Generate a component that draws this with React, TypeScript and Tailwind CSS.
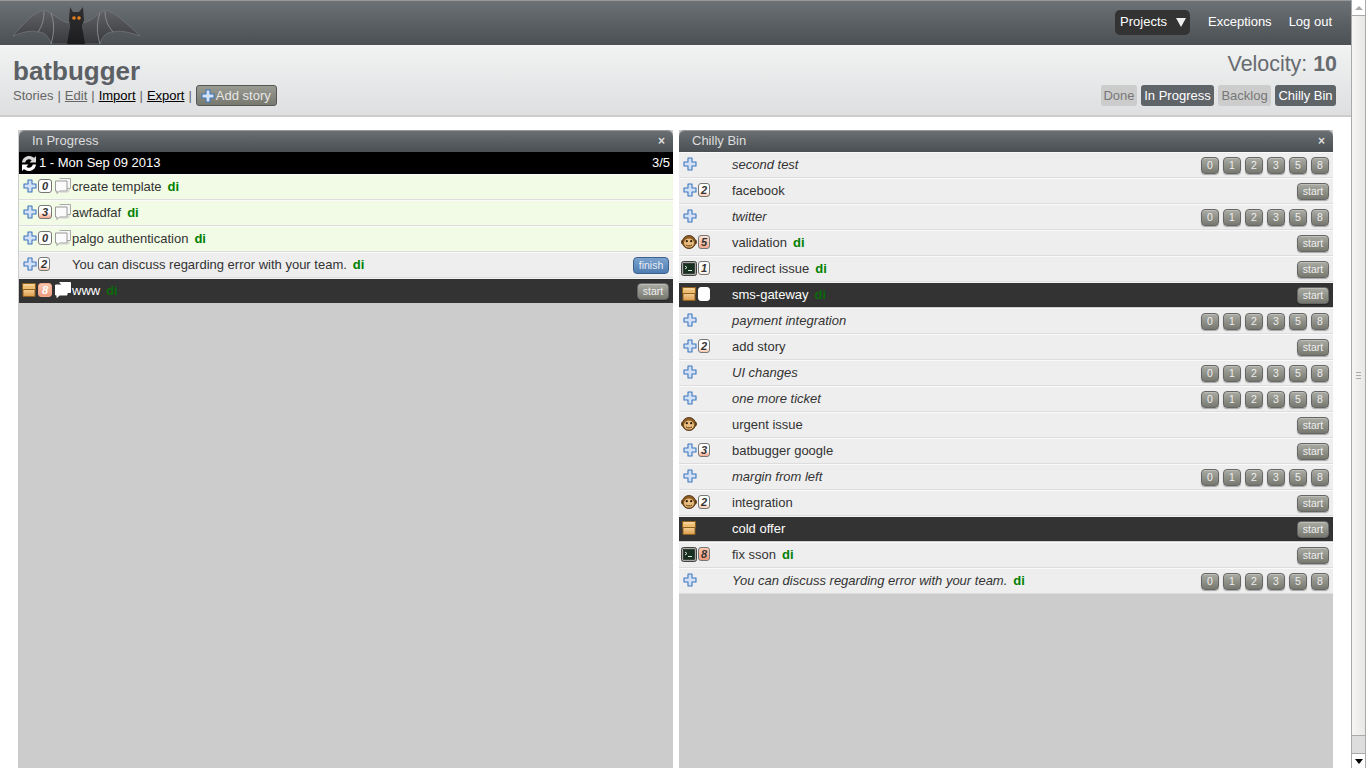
import { FC } from "react";

type Story = {
  title: string;
  type?: "feature" | "bug" | "chore" | "release";
  est?: number;
  state?: "start" | "finish" | "estimate";
  di?: boolean;
  italic?: boolean;
  dark?: boolean;
  green?: boolean;
  chat?: boolean;
  box?: boolean;
};

const PlusIcon = () => (
  <svg width="14" height="14" viewBox="0 0 14 14" className="shrink-0">
    <path d="M5 1h4v4h4v4H9v4H5V9H1V5h4z" fill="#d3e2f6" stroke="#3f76bd" strokeWidth="1.1" strokeLinejoin="round" />
  </svg>
);

const ChatIcon: FC<{ light?: boolean }> = ({ light }) => (
  <svg width="16" height="16" viewBox="0 0 16 16" className="shrink-0">
    <path d="M4.500 .5h11v10H12" fill={light ? "#fff" : "#f7f7f7"} stroke={light ? "#fff" : "#aaa"} />
    <path d="M.5 3h11.500v10H4.500l-2.500 2.500V13H.5z" fill={light ? "#fff" : "#fbfbfb"} stroke={light ? "#fff" : "#999"} strokeLinejoin="round" />
    {!light && <path d="M5 14h8l1-1v-2" fill="none" stroke="#ccc" />}
  </svg>
);

const BoxIcon = () => (
  <svg width="16" height="14" viewBox="0 0 16 14" className="shrink-0">
    <defs>
      <linearGradient id="boxBody" x1="0" y1="0" x2="0" y2="1">
        <stop offset="0" stopColor="#f4cf93" />
        <stop offset="1" stopColor="#dc9c4c" />
      </linearGradient>
    </defs>
    <path d="M2 6.500h12v7H2z" fill="url(#boxBody)" stroke="#8f6220" />
    <path d="M1.500 .5h13v6h-13z" fill="#efbd72" stroke="#8f6220" strokeLinejoin="round" />
    <path d="M3 2h10" stroke="#fbe7c2" />
  </svg>
);

const MonkeyIcon = () => (
  <svg width="16" height="14" viewBox="0 0 16 14" className="shrink-0">
    <circle cx="2.200" cy="7" r="2" fill="#b07a38" stroke="#4d3010" strokeWidth=".8" />
    <circle cx="13.800" cy="7" r="2" fill="#b07a38" stroke="#4d3010" strokeWidth=".8" />
    <circle cx="8" cy="7" r="6.600" fill="#8a5a24" stroke="#4d3010" strokeWidth=".8" />
    <ellipse cx="8" cy="8" rx="5" ry="4.600" fill="#e9bd80" />
    <circle cx="5.800" cy="6.200" r="1.100" fill="#2b1a08" />
    <circle cx="10.200" cy="6.200" r="1.100" fill="#2b1a08" />
    <path d="M5 10c2 1.200 4 1.200 6 0" fill="none" stroke="#5d3a14" />
  </svg>
);

const ConsoleIcon = () => (
  <svg width="16" height="15" viewBox="0 0 16 15" className="shrink-0">
    <rect x=".5" y=".5" width="15" height="14" rx="2" fill="#a5a8a1" stroke="#444" />
    <rect x="2.500" y="2.500" width="11" height="10" fill="#18301f" stroke="#222" strokeWidth=".6" />
    <path d="M4 5l2 1.500L4 8M7 9.500h4" fill="none" stroke="#d8e8d8" />
  </svg>
);

const ReloadIcon = () => (
  <svg width="16" height="17" viewBox="0 0 16 17" className="shrink-0">
    <path d="M1 7.500C1.500 3 5 .8 8.500 1c2 .1 3.500 1 4.500 2l2-2v6.500H8.500l2.200-2.200C9.800 4.500 9 4.200 8 4.200 6 4.200 4.600 5.600 4.200 7.500z" fill="#d8d8d8" />
    <path d="M15 9.500c-.5 4.500-4 6.700-7.500 6.500-2-.1-3.500-1-4.500-2l-2 2V9.500h6.500l-2.200 2.200c.9.800 1.700 1.100 2.700 1.100 2 0 3.400-1.400 3.800-3.300z" fill="#fff" />
  </svg>
);

const Badge: FC<{ n?: number; dark?: boolean; wide?: boolean }> = ({ n, dark, wide }) => {
  const fill: Record<number, string> = {
    0: "bg-white",
    1: "bg-gradient-to-b from-white to-[#f8f0ea]",
    2: "bg-gradient-to-b from-white from-60% to-[#f6c8ae]",
    3: "bg-gradient-to-b from-white from-50% to-[#f2a98c]",
    5: "bg-gradient-to-b from-[#fbe3d6] to-[#f2a98c]",
    8: "bg-gradient-to-b from-[#f9c7ae] to-[#ee9c7e]",
  };
  return (
    <span
      className={`ml-[1px] flex h-[14px] shrink-0 items-center justify-center rounded-[3px] border text-[11px] leading-none font-bold italic ${
        wide ? "w-[14px]" : "w-[12px]"
      } ${n === undefined ? "border-white bg-white" : fill[n]} ${dark ? "border-[#f2a98c] text-white" : "border-[#777] text-[#333]"}`}
    >
      {n}
    </span>
  );
};

const btnClass =
  "rounded-[4px] border border-[#666] bg-gradient-to-b from-[#aaaba4] to-[#77786f] text-[10.500px] leading-none text-[#eee] shadow-[0_1px_1px_rgba(0,0,0,0.3),inset_0_1px_0_rgba(255,255,255,0.25)]";

const Estimates = () => (
  <div className="flex gap-[4px]">
    {[0, 1, 2, 3, 5, 8].map((n) => (
      <span key={n} className={`flex h-[17px] w-[18px] items-center justify-center ${btnClass}`}>
        {n}
      </span>
    ))}
  </div>
);

const Row: FC<{ s: Story }> = ({ s }) => {
  const bg = s.dark
    ? "bg-[#333] text-white border-t-[#f4f4f4] border-b-[#ccc]"
    : s.green
      ? "bg-[#f2fbe6] text-[#333] border-t-[#fafafa] border-b-[#ddd]"
      : "bg-[#eee] text-[#333] border-t-[#fafafa] border-b-[#ddd]";
  return (
    <div className={`flex h-[26px] items-center border-y pr-[4px] text-[13px] ${bg}`}>
      <div className="flex w-[53px] shrink-0 -translate-y-px items-center pl-[3px]">
        {s.type === "feature" && <span className="ml-[1px]"><PlusIcon /></span>}
        {s.type === "bug" && <span className="-ml-[1px]"><MonkeyIcon /></span>}
        {s.type === "chore" && <span className="-ml-[1px]"><ConsoleIcon /></span>}
        {s.type === "release" && <span className="-ml-[1px]"><BoxIcon /></span>}
        {(s.est !== undefined || s.box) && <Badge n={s.est} dark={s.dark} wide={s.chat} />}
        {s.chat && <span className="ml-[3px]"><ChatIcon light={s.dark} /></span>}
      </div>
      <span className={s.italic ? "italic" : ""}>{s.title}</span>
      {s.di && <span className={`ml-[6px] font-bold ${s.dark ? "text-[#0a6a0a]" : "text-[#008000]"}`}>di</span>}
      <div className="ml-auto flex items-center">
        {s.state === "start" && <button className={`h-[17px] w-[32px] pt-px ${btnClass}`}>start</button>}
        {s.state === "finish" && (
          <button className="h-[17px] w-[36px] rounded-[4px] border border-[#3b628f] bg-gradient-to-b from-[#7ca3cf] to-[#4f7cb0] pt-px text-[10.500px] leading-none text-[#e8eef5]">
            finish
          </button>
        )}
        {s.state === "estimate" && <Estimates />}
      </div>
    </div>
  );
};

const ColumnHead: FC<{ title: string }> = ({ title }) => (
  <div className="flex h-[22px] items-center justify-between rounded-t-[6px] bg-gradient-to-b from-[#6b7075] to-[#4a4f53] pr-[8px] pb-[1px] pl-[13px] text-[13px] text-[#ddd] shadow-[inset_0_1px_0_#999]">
    <span>{title}</span>
    <span className="text-[12px] font-bold text-[#ddd]">×</span>
  </div>
);

const inProgress: Story[] = [
  { title: "create template", type: "feature", est: 0, chat: true, di: true, green: true },
  { title: "awfadfaf", type: "feature", est: 3, chat: true, di: true, green: true },
  { title: "palgo authentication", type: "feature", est: 0, chat: true, di: true, green: true },
  { title: "You can discuss regarding error with your team.", type: "feature", est: 2, di: true, state: "finish" },
  { title: "www", type: "release", est: 8, chat: true, di: true, dark: true, state: "start" },
];

const chillyBin: Story[] = [
  { title: "second test", type: "feature", italic: true, state: "estimate" },
  { title: "facebook", type: "feature", est: 2, state: "start" },
  { title: "twitter", type: "feature", italic: true, state: "estimate" },
  { title: "validation", type: "bug", est: 5, di: true, state: "start" },
  { title: "redirect issue", type: "chore", est: 1, di: true, state: "start" },
  { title: "sms-gateway", type: "release", box: true, di: true, dark: true, state: "start" },
  { title: "payment integration", type: "feature", italic: true, state: "estimate" },
  { title: "add story", type: "feature", est: 2, state: "start" },
  { title: "UI changes", type: "feature", italic: true, state: "estimate" },
  { title: "one more ticket", type: "feature", italic: true, state: "estimate" },
  { title: "urgent issue", type: "bug", state: "start" },
  { title: "batbugger google", type: "feature", est: 3, state: "start" },
  { title: "margin from left", type: "feature", italic: true, state: "estimate" },
  { title: "integration", type: "bug", est: 2, state: "start" },
  { title: "cold offer", type: "release", dark: true, state: "start" },
  { title: "fix sson", type: "chore", est: 8, di: true, state: "start" },
  { title: "You can discuss regarding error with your team.", type: "feature", italic: true, di: true, state: "estimate" },
];

const Bat = () => (
  <svg width="150" height="44" viewBox="0 0 150 44" className="shrink-0">
    <defs>
      <linearGradient id="batWing" x1="0" y1="0" x2="0" y2="1">
        <stop offset="0" stopColor="#606265" />
        <stop offset="1" stopColor="#38393c" />
      </linearGradient>
      <linearGradient id="batBody" x1="0" y1="0" x2="0" y2="1">
        <stop offset="0" stopColor="#303032" />
        <stop offset="1" stopColor="#1c1c1e" />
      </linearGradient>
    </defs>
    <path d="M70 23C60 22 54 13 44 10 33 12 22 26 13 36 23 32 31 30 38 32 44 32 49 36 51 44H70z" fill="url(#batWing)" stroke="#7c7e81" strokeWidth=".6" />
    <path d="M82 23C92 22 97 13 105 10 116 12 129 26 140 36 129 32 119 30 113 32 107 32 102 36 100 44H82z" fill="url(#batWing)" stroke="#7c7e81" strokeWidth=".6" />
    <path d="M44 11C44 20 42 26 38 32M51 13C55 24 54 34 51 44M105 11C105 20 108 26 113 32M100 13C96 24 97 34 100 44" fill="none" stroke="#8d8f92" strokeWidth=".9" />
    <path d="M70 7L73 12H79L83 7 84 20 82 26 85 44H67L70 26 69 20z" fill="url(#batBody)" />
    <circle cx="74" cy="18" r="1.800" fill="#e8801a" />
    <circle cx="79" cy="18" r="1.800" fill="#e8801a" />
  </svg>
);

const ScrollBar = () => (
  <div className="flex h-screen w-[15px] shrink-0 flex-col border-x border-[#aaa] bg-[#ddd]">
    <div className="flex h-[15px] items-center justify-center bg-white">
      <div className="h-0 w-0 border-x-[4px] border-b-[4px] border-x-transparent border-b-[#aaa]" />
    </div>
    <div className="flex h-[721px] flex-col items-center justify-center gap-[2px] border-y border-[#aaa] bg-gradient-to-r from-[#f6f5f3] to-[#e8e8e6]">
      <div className="h-px w-[5px] bg-[#aaa]" />
      <div className="h-px w-[5px] bg-[#aaa]" />
      <div className="h-px w-[5px] bg-[#aaa]" />
    </div>
    <div className="flex-1" />
    <div className="flex h-[15px] items-center justify-center border-t border-[#aaa] bg-white">
      <div className="h-0 w-0 border-x-[4px] border-t-[5px] border-x-transparent border-t-black" />
    </div>
  </div>
);

export default function App() {
  return (
    <div className="flex h-screen overflow-hidden bg-white font-['Liberation_Sans',Arial,sans-serif]">
      <div className="flex min-w-0 flex-1 flex-col">
        {/* top nav */}
        <div className="flex h-[45px] shrink-0 items-center justify-between border-t border-[#999] bg-gradient-to-b from-[#6c7176] to-[#4b5054] pr-[19px] pb-[2px] text-[13px] text-white">
          <Bat />
          <div className="flex items-center">
            <div className="flex h-[25px] w-[75px] items-center justify-between rounded-[5px] bg-[#333] pr-[4px] pl-[5px]">
              <span>Projects</span>
              <div className="h-0 w-0 border-x-[5px] border-t-[9px] border-x-transparent border-t-[#eee]" />
            </div>
            <span className="ml-[18px]">Exceptions</span>
            <span className="ml-[17px]">Log out</span>
          </div>
        </div>

        {/* project header */}
        <div className="flex h-[72px] shrink-0 justify-between border-t border-b-2 border-t-[#f5f5f5] border-b-[#ccc] bg-gradient-to-b from-[#f1f2f2] to-[#dedfe0] pr-[15px] pl-[13px]">
          <div>
            <h1 className="mt-[11px] text-[26px] leading-[28px] font-bold text-[#5b6065]">batbugger</h1>
            <div className="flex h-[21px] items-center text-[13px] text-[#666]">
              <span>Stories</span>
              <span className="mx-[4px]">|</span>
              <span className="underline">Edit</span>
              <span className="mx-[4px]">|</span>
              <span className="text-black underline">Import</span>
              <span className="mx-[4px]">|</span>
              <span className="text-black underline">Export</span>
              <span className="mx-[4px]">|</span>
              <button className="flex h-[21px] w-[81px] items-center gap-[1px] rounded-[3px] border border-[#555] bg-gradient-to-b from-[#9a9c94] to-[#77796f] pl-[4px] text-[13px] text-[#e8e8e8]">
                <PlusIcon />
                Add story
              </button>
            </div>
          </div>
          <div className="flex flex-col items-end">
            <div className="mt-[6px] mr-[-1px] text-[21.400px] leading-[24px] text-[#666b70]">
              Velocity: <b>10</b>
            </div>
            <div className="mt-[9px] flex h-[21px] gap-[4px] text-[13px]">
              <span className="flex w-[36px] items-center justify-center rounded-[3px] bg-[#ccc] text-[#777]">Done</span>
              <span className="flex w-[73px] items-center justify-center rounded-[3px] bg-[#5f6469] text-white">In Progress</span>
              <span className="flex w-[53px] items-center justify-center rounded-[3px] bg-[#ccc] text-[#777]">Backlog</span>
              <span className="flex w-[61px] items-center justify-center rounded-[3px] bg-[#5f6469] text-white">Chilly Bin</span>
            </div>
          </div>
        </div>

        {/* columns */}
        <div className="grid min-h-0 flex-1 grid-cols-[655px_654px] gap-[6px] pt-[13px] pl-[18px]">
          <div className="flex flex-col bg-[#ccc] pl-[1px]">
            <ColumnHead title="In Progress" />
            <div className="flex h-[22px] items-center justify-between bg-black pr-[3px] pl-[2px] text-[13px] text-white">
              <div className="flex items-center gap-[2px]">
                <ReloadIcon />
                <span>1 - Mon Sep 09 2013</span>
              </div>
              <span>3/5</span>
            </div>
            {inProgress.map((s) => (
              <Row key={s.title} s={s} />
            ))}
          </div>
          <div className="flex flex-col bg-[#ccc]">
            <ColumnHead title="Chilly Bin" />
            {chillyBin.map((s, i) => (
              <Row key={i} s={s} />
            ))}
          </div>
        </div>
      </div>
      <ScrollBar />
    </div>
  );
}
